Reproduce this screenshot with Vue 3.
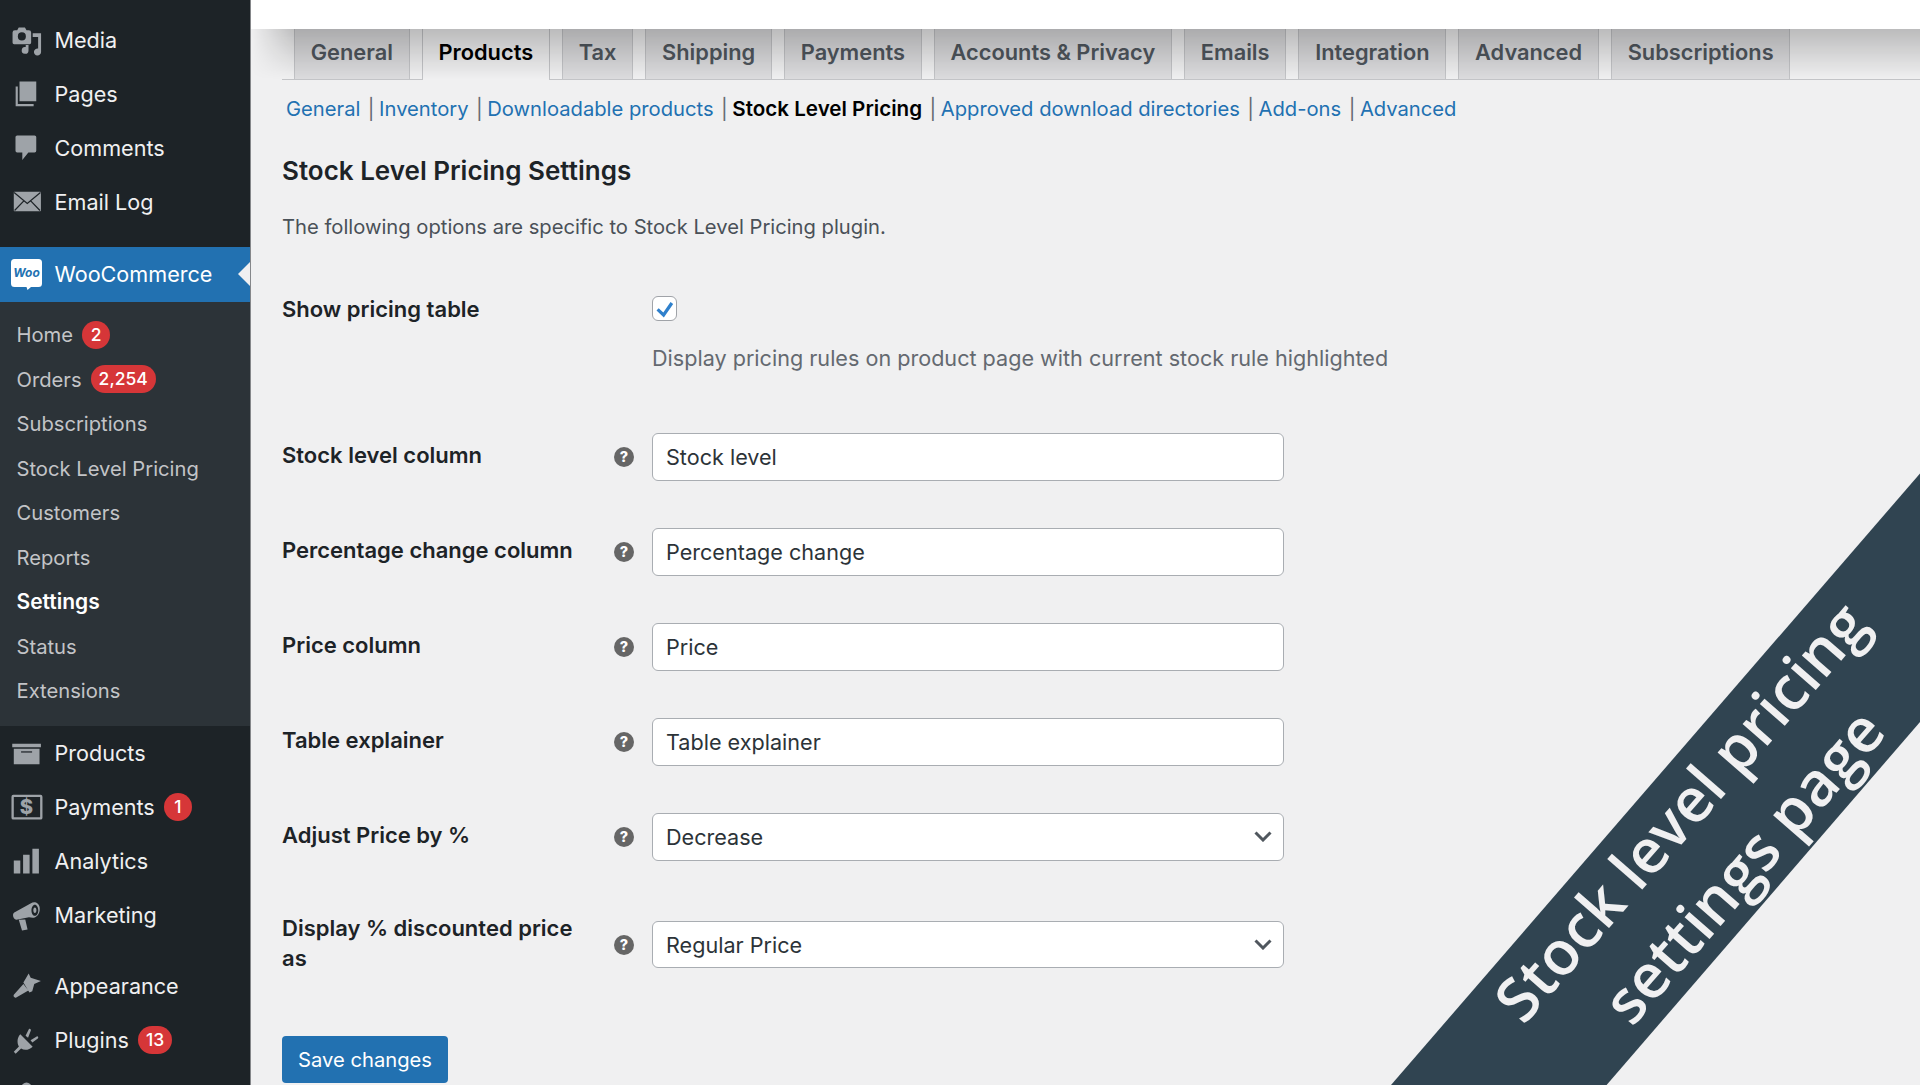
<template>
  <div class="page">
    <aside class="sidebar">
      <ul class="menu menu-top">
        <li v-for="item in topMenu" :key="item.icon" class="menu-item">
          <span class="menu-icon">
            <svg viewBox="0 0 20 20">
              <path :d="icons[item.icon]" fill-rule="evenodd" />
              <path v-if="details[item.icon]" :d="details[item.icon]" class="detail" />
            </svg>
          </span>
          <span>{{ item.label }}</span>
        </li>
      </ul>

      <div class="menu-current">
        <span class="menu-icon">
          <svg viewBox="0 0 31 31">
            <path
              d="M3.500 0h24a3.500 3.500 0 0 1 3.500 3.500v21a3.500 3.500 0 0 1-3.500 3.500H20l-3.500 3-1-3H3.500A3.500 3.500 0 0 1 0 24.500v-21A3.500 3.500 0 0 1 3.500 0z"
              fill="#fff"
            />
            <text x="15.500" y="18" class="woo-text" text-anchor="middle">Woo</text>
          </svg>
        </span>
        <span class="current-label">WooCommerce</span>
      </div>

      <ul class="submenu">
        <li v-for="sub in subMenu" :key="sub.label" class="submenu-item" :class="{ current: sub.current }">
          <span>{{ sub.label }}</span>
          <span v-if="sub.badge" class="badge">{{ sub.badge }}</span>
        </li>
      </ul>

      <ul class="menu">
        <li
          v-for="item in bottomMenu"
          :key="item.icon"
          class="menu-item"
          :class="{ 'after-gap': item.gap }"
        >
          <span class="menu-icon">
            <svg viewBox="0 0 20 20">
              <path :d="icons[item.icon]" fill-rule="evenodd" />
              <path v-if="details[item.icon]" :d="details[item.icon]" class="detail" />
              <text v-if="item.icon === 'payments'" x="10" y="14.500" class="dollar" text-anchor="middle">$</text>
            </svg>
          </span>
          <span v-if="item.label">{{ item.label }}</span>
          <span v-if="item.badge" class="badge">{{ item.badge }}</span>
        </li>
      </ul>
    </aside>

    <main class="main">
      <div class="topbar"></div>

      <nav class="tabs">
        <a v-for="tab in tabs" :key="tab" class="tab" :class="{ active: tab === 'Products' }">{{ tab }}</a>
      </nav>

      <div class="subnav">
        <template v-for="(link, i) in subLinks" :key="link">
          <span v-if="i > 0" class="sep">|</span>
          <strong v-if="link === 'Stock Level Pricing'" class="sublink-current">{{ link }}</strong>
          <a v-else class="sublink">{{ link }}</a>
        </template>
      </div>

      <h2 class="title">Stock Level Pricing Settings</h2>
      <p class="intro">The following options are specific to Stock Level Pricing plugin.</p>

      <form class="form" @submit.prevent>
        <div class="row row-check">
          <label class="label">Show pricing table</label>
          <span></span>
          <div class="field">
            <span class="checkbox">
              <svg viewBox="0 0 25 25">
                <path d="M5 13.500l6.500 6L20.500 6.500" />
              </svg>
            </span>
            <p class="field-desc">Display pricing rules on product page with current stock rule highlighted</p>
          </div>
        </div>

        <div v-for="field in fields" :key="field.label" class="row" :class="{ tall: field.tall }">
          <label class="label">{{ field.label }}</label>
          <span class="help">?</span>
          <div class="field">
            <div class="control">
              <span>{{ field.value }}</span>
              <svg v-if="field.select" class="chevron" viewBox="0 0 18 11">
                <path d="M1.500 1.500L9 9l7.500-7.500" />
              </svg>
            </div>
          </div>
        </div>

        <button type="button" class="save">Save changes</button>
      </form>
    </main>

    <div class="banner">
      <div class="banner-text">Stock level pricing<br />settings page</div>
    </div>
  </div>
</template>

<script setup>
  const icons = {
    media:
      'M1 5.500A1.500 1.500 0 0 1 2.500 4H4l1-1.800h4L10 4h1.500A1.500 1.500 0 0 1 13 5.500V12a1 1 0 0 1-1 1H2a1 1 0 0 1-1-1zM7 5.400a2.600 2.600 0 1 0 0 5.200 2.600 2.600 0 0 0 0-5.200zM14 6h5.400v12.100a2.300 2.300 0 1 1-1.900-2.300V8.400H14zM9.500 13.500h1.800v3.600a2.200 2.200 0 1 1-1.800-2.200z',
    pages: 'M5.500 2.200h10.800V15H5.500zM3 5.500h1.400v11.200h10.200v1.500H3z',
    comments:
      'M4 2.200h11.200a1.100 1.100 0 0 1 1.100 1.100v8.800a1.100 1.100 0 0 1-1.100 1.100h-4L7.300 18v-4.800H4a1.100 1.100 0 0 1-1.100-1.100V3.300A1.100 1.100 0 0 1 4 2.200z',
    email: 'M2.300 3.700h16.500a.5.500 0 0 1 .5.500v11.600a.5.500 0 0 1-.5.500H2.300a.5.500 0 0 1-.5-.5V4.200a.5.500 0 0 1 .5-.5z',
    products: 'M.8 3.700h18.500v2.200H.8zM1.800 6.900h16.600V17H1.800z',
    payments:
      'M1.500 1.800h17.600a1.200 1.200 0 0 1 1.200 1.200v13.600a1.200 1.200 0 0 1-1.200 1.200H1.500a1.200 1.200 0 0 1-1.200-1.200V3a1.200 1.200 0 0 1 1.200-1.200zM1.800 3.300v13h17v-13z',
    analytics: 'M1.800 9.300H6v8.500H1.800zM7.800 5.600H12v12.200H7.800zM13.800 1.800H18v16h-4.200z',
    marketing:
      'M1.300 9.800c0-1 .5-1.600 1.400-2l9.900-5.600c1.200-.7 2.400-.9 3.500-.6 1.800.6 2.800 2.800 2.400 5.200-.4 2.500-2 4.400-3.900 4.600-1 .1-2-.1-3-.3l-8.100 1.700c-1.300-.2-2.200-1.600-2.200-3zM15.400 3c-1.200 0-2.200 1.600-2.200 3.600s1 3.600 2.200 3.600 2.200-1.600 2.200-3.600-1-3.600-2.200-3.600zM15.400 4.800c.6 0 1 .8 1 1.800s-.4 1.800-1 1.800-1-.8-1-1.800.4-1.800 1-1.800zM5 12.800l4.200-.3 1.500 6.600-3.600.5z',
    appearance:
      'M8 7.400l3.400-5.800 1.300 2.800 6.600 2-4.300 2-1.300 4.700-1.800.7zM8 8.400l3.200 4.200-7.800 4.500c-1 .6-2.200-.7-1.600-1.700z',
    plugins:
      'M6 6l8 8c-2.200 2.200-5.400 2.600-7.500 1.200L3 18.500l-1.200-1.200 3.300-3.500C3.700 11.500 4 8 6 6zM9.400 7l2.100-4.300c.3-.6 1.600 0 1.300.8L11 8.200zM12.600 9.800l4-2.400c.7-.4 1.400.9.700 1.300l-3.500 2.600z',
    users: 'M10 2.200a3.300 3.300 0 1 0 0 6.600 3.300 3.300 0 0 0 0-6.600z',
  }

  const details = {
    email: 'M2 4.200l8.500 7 8.500-7M2.300 15.800l6-6.200M18.700 15.800l-6-6.200',
    products: 'M6.500 9h7.100',
  }

  const topMenu = [
    { label: 'Media', icon: 'media' },
    { label: 'Pages', icon: 'pages' },
    { label: 'Comments', icon: 'comments' },
    { label: 'Email Log', icon: 'email' },
  ]

  const subMenu = [
    { label: 'Home', badge: '2' },
    { label: 'Orders', badge: '2,254' },
    { label: 'Subscriptions' },
    { label: 'Stock Level Pricing' },
    { label: 'Customers' },
    { label: 'Reports' },
    { label: 'Settings', current: true },
    { label: 'Status' },
    { label: 'Extensions' },
  ]

  // the last row only shows the top of its icon, its label is below the fold
  const bottomMenu = [
    { label: 'Products', icon: 'products' },
    { label: 'Payments', icon: 'payments', badge: '1' },
    { label: 'Analytics', icon: 'analytics' },
    { label: 'Marketing', icon: 'marketing' },
    { label: 'Appearance', icon: 'appearance', gap: true },
    { label: 'Plugins', icon: 'plugins', badge: '13' },
    { label: '', icon: 'users' },
  ]

  const tabs = [
    'General',
    'Products',
    'Tax',
    'Shipping',
    'Payments',
    'Accounts & Privacy',
    'Emails',
    'Integration',
    'Advanced',
    'Subscriptions',
  ]

  const subLinks = [
    'General',
    'Inventory',
    'Downloadable products',
    'Stock Level Pricing',
    'Approved download directories',
    'Add-ons',
    'Advanced',
  ]

  const fields = [
    { label: 'Stock level column', value: 'Stock level' },
    { label: 'Percentage change column', value: 'Percentage change' },
    { label: 'Price column', value: 'Price' },
    { label: 'Table explainer', value: 'Table explainer' },
    { label: 'Adjust Price by %', value: 'Decrease', select: true },
    { label: 'Display % discounted price as', value: 'Regular Price', select: true, tall: true },
  ]
</script>

<style scoped>
  .page {
    position: relative;
    display: flex;
    width: 1920px;
    height: 1085px;
    overflow: hidden;
    background: #f0f0f1;
    font-family: Inter, 'Liberation Sans', sans-serif;
    color: #1d2327;
  }

  /* sidebar */
  .sidebar {
    flex: 0 0 250px;
    height: 1085px;
    padding-top: 12.500px;
    box-sizing: content-box;
    background: #1d2327;
    border-right: 1px solid #85878a;
    color: #f0f0f1;
    font-size: 21.600px;
    overflow: hidden;
  }

  .menu {
    list-style: none;
    margin: 0;
    padding: 0;
  }

  .menu-top {
    padding-bottom: 18.500px;
  }

  .menu-item {
    display: flex;
    align-items: center;
    height: 54px;
  }

  .menu-item.after-gap {
    margin-top: 17.400px;
  }

  .menu-icon {
    flex: 0 0 54.500px;
    display: flex;
    justify-content: flex-start;
    padding-left: 10.500px;
    box-sizing: border-box;
  }

  .menu-icon svg {
    width: 31px;
    height: 31px;
    overflow: visible;
    fill: #9ea3a8;
  }

  .detail {
    fill: none;
    stroke: #1d2327;
    stroke-width: 0.8;
  }

  .dollar {
    font-size: 13px;
    font-weight: 800;
    fill: #9ea3a8;
  }

  .menu-current {
    position: relative;
    display: flex;
    align-items: center;
    height: 55px;
    background: #2271b1;
    color: #fff;
  }

  .current-label {
    margin-top: -2px;
  }

  .menu-current::after {
    content: '';
    position: absolute;
    right: 0;
    top: 15px;
    border: 12.500px solid transparent;
    border-right-color: #f0f0f1;
    border-left-width: 0;
  }

  .woo-text {
    font-size: 12px;
    font-weight: 700;
    font-style: italic;
    fill: #2271b1;
  }

  .submenu {
    list-style: none;
    margin: 0;
    padding: 10.500px 0 13px;
    background: #2c3338;
    color: #c3c4c7;
    font-size: 20.200px;
  }

  .submenu-item {
    display: flex;
    align-items: center;
    height: 44.500px;
    padding-left: 16.500px;
  }

  .submenu-item.current {
    color: #fff;
    font-size: 21px;
    font-weight: 600;
  }

  .badge {
    display: inline-block;
    min-width: 28px;
    height: 28px;
    padding: 0 8px;
    box-sizing: border-box;
    margin-left: 9px;
    border-radius: 14px;
    background: #d63638;
    color: #fff;
    font-size: 17.500px;
    font-weight: 500;
    line-height: 28px;
    text-align: center;
  }

  /* main column */
  .main {
    position: relative;
    flex: 1;
    min-width: 0;
    padding-left: 31px;
  }

  .main::before {
    content: '';
    position: absolute;
    left: 0;
    right: 0;
    top: 29px;
    height: 50px;
    z-index: 2;
    pointer-events: none;
    background: linear-gradient(rgba(0, 0, 0, 0.22), rgba(0, 0, 0, 0));
    -webkit-mask-image: linear-gradient(to right, transparent, #000 45px);
    mask-image: linear-gradient(to right, transparent, #000 45px);
  }

  .topbar {
    height: 29px;
    margin-left: -31px;
    background: #fff;
  }

  .tabs {
    display: flex;
    gap: 12px;
    height: 50px;
    padding-left: 12px;
    border-bottom: 1px solid #c3c4c7;
    font-size: 21.800px;
    font-weight: 600;
  }

  .tab {
    height: 50px;
    padding: 0 15.800px;
    box-sizing: border-box;
    border: 1px solid #c3c4c7;
    border-top: 0;
    border-bottom: 0;
    background: #dcdcde;
    color: #50575e;
    line-height: 47px;
  }

  .tab.active {
    height: 51px;
    background: #f0f0f1;
    color: #000;
  }

  .subnav {
    display: flex;
    align-items: center;
    height: 30px;
    margin-top: 13px;
    padding-left: 4px;
    font-size: 20.200px;
  }

  .sublink {
    color: #2271b1;
  }

  .sublink-current {
    color: #000;
    font-size: 20.600px;
    font-weight: 600;
  }

  .sep {
    margin: 0 4.500px 0 7.500px;
    color: #646970;
  }

  .title {
    margin: 33px 0 0;
    font-size: 26px;
    font-weight: 600;
    line-height: 30px;
  }

  .intro {
    margin: 26px 0 0;
    font-size: 20.200px;
    line-height: 30px;
    color: #4a5158;
  }

  .form {
    margin-top: 54px;
  }

  .row {
    display: grid;
    grid-template-columns: 314px 20px 632px;
    column-gap: 18px;
    align-items: center;
    margin-top: 47.500px;
  }

  .row-check {
    align-items: start;
    margin-top: 0;
  }

  .row-check + .row {
    margin-top: 60px;
  }

  .row.tall {
    margin-top: 52px;
  }

  .label {
    max-width: 310px;
    padding-bottom: 4px;
    font-size: 22px;
    font-weight: 600;
    line-height: 30px;
  }

  .row-check .label {
    margin-top: -2px;
    padding-bottom: 0;
  }

  .help {
    width: 20px;
    height: 20px;
    border-radius: 50%;
    background: #666;
    color: #fff;
    font-size: 14.500px;
    font-weight: 800;
    line-height: 20px;
    text-align: center;
  }

  .checkbox {
    display: block;
    width: 25px;
    height: 25px;
    box-sizing: border-box;
    border: 1px solid #a0a3a8;
    border-radius: 6px;
    background: #fff;
  }

  .checkbox svg {
    display: block;
    width: 23px;
    height: 23px;
    fill: none;
    stroke: #2f80cc;
    stroke-width: 3.500;
  }

  .field-desc {
    margin: 22px 0 0;
    font-size: 21.600px;
    line-height: 30px;
    color: #646970;
    white-space: nowrap;
  }

  .control {
    display: flex;
    align-items: center;
    justify-content: space-between;
    height: 47.500px;
    box-sizing: border-box;
    padding: 0 11px 0 13px;
    border: 1.500px solid #a9adb2;
    border-radius: 6px;
    background: #fff;
    font-size: 21.600px;
    color: #2c3338;
  }

  .chevron {
    width: 18px;
    height: 11px;
    fill: none;
    stroke: #50575e;
    stroke-width: 3;
  }

  .save {
    display: block;
    width: 166px;
    height: 47px;
    margin-top: 59px;
    padding: 0;
    border: 0;
    border-radius: 4px;
    background: #2271b1;
    color: #fff;
    font-family: inherit;
    font-size: 20.200px;
  }

  /* corner ribbon over the page */
  .banner {
    position: absolute;
    inset: 0;
    pointer-events: none;
    background: #304451;
    clip-path: polygon(1391px 1085px, 1920px 473.500px, 1920px 722px, 1606.600px 1085px);
  }

  .banner-text {
    position: absolute;
    left: 1711px;
    top: 838px;
    width: 760px;
    margin-left: -380px;
    margin-top: -83px;
    transform: rotate(-49deg);
    color: #f0f0f1;
    font-family: 'Open Sans', sans-serif;
    font-size: 61px;
    font-weight: 600;
    line-height: 83px;
    text-align: center;
  }
</style>

<style>
  html,
  body {
    margin: 0;
    overflow: hidden;
  }
</style>
